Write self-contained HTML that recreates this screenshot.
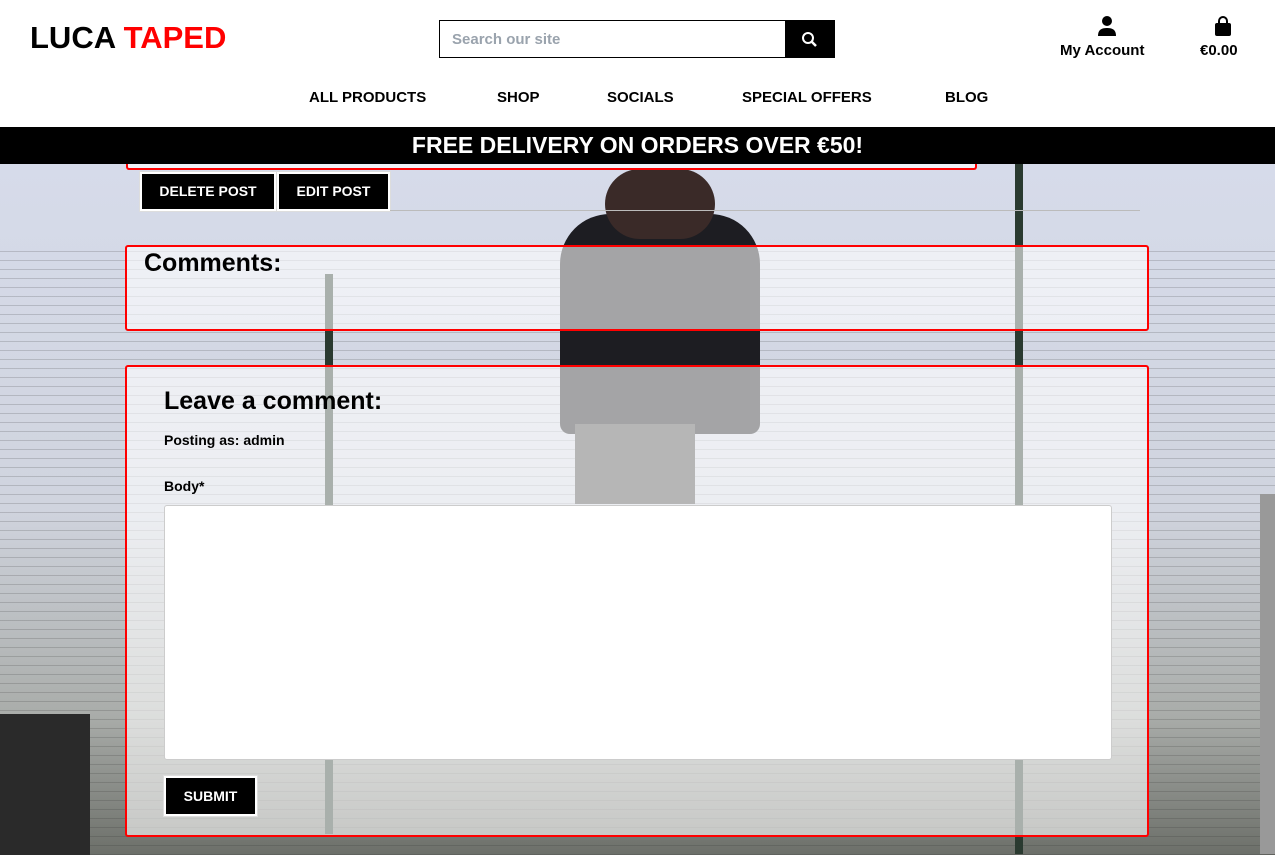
<!DOCTYPE html>
<html><head><style>
*{box-sizing:border-box;margin:0;padding:0}
body{width:1275px;height:855px;overflow:hidden;font-family:"Liberation Sans",sans-serif;position:relative;background:#fff}
.bg{position:absolute;left:0;top:164px;width:1275px;height:691px;background:linear-gradient(#d6dbea 0%,#d0d4de 50%,#a9aca9 80%,#6c6f69 100%);overflow:hidden}
.fence{position:absolute;left:0;top:80px;width:1275px;height:620px;background:repeating-linear-gradient(0deg,rgba(40,40,40,.18) 0 1px,transparent 1px 9px)}
.person{position:absolute;background:#1d1d22}
.post{position:absolute;background:#2a3a30;width:8px}
.hdr{position:absolute;left:0;top:0;width:1275px;height:127px;background:#fff}
.logo{position:absolute;left:30px;top:20px;font-size:31px;font-weight:bold}
.search{position:absolute;left:439px;top:20px;width:396px;height:38px;border:1px solid #000}
.search span{position:absolute;left:12px;top:10px;font-size:15px;color:#9aa3ad;font-weight:bold}
.search .btn{position:absolute;right:0;top:0;width:49px;height:36px;background:#000}
.nav{position:absolute;top:89px;font-size:15px;font-weight:bold}
.banner{position:absolute;left:0;top:127px;width:1275px;height:37px;background:#000;color:#fff;text-align:center;font-size:23px;font-weight:bold;line-height:36px;z-index:5}
.box{position:absolute;border:2px solid #f00;border-radius:3px;background:rgba(255,255,255,.6)}
.bb{position:absolute;background:#000;color:#fff;font-weight:bold;font-size:14px;border:2px solid #fff;outline:1px solid #ddd;text-align:center}
</style></head><body>
<div class="bg">
<div class="fence"></div>
<div class="post" style="left:325px;top:110px;height:560px"></div>
<div class="post" style="left:1015px;top:0;height:690px"></div>
<div class="post" style="left:1260px;top:330px;height:360px;width:15px;background:#999"></div>
<div class="person" style="left:560px;top:50px;width:200px;height:220px;border-radius:50px 50px 10px 10px"></div>
<div class="person" style="left:605px;top:5px;width:110px;height:70px;border-radius:40px;background:#3a2a28"></div>
<div class="person" style="left:575px;top:260px;width:120px;height:80px;background:#4a4a4a"></div>
<div class="person" style="left:0;top:550px;width:90px;height:141px;background:#2a2a2a"></div>
</div>
<div class="hdr">
<div class="logo">LUCA <span style="color:#f00">TAPED</span></div>
<div class="search"><span>Search our site</span><div class="btn"><svg width="49" height="36" viewBox="0 0 49 36"><circle cx="23" cy="17" r="5" fill="none" stroke="#fff" stroke-width="2"/><path d="M27 21l4 4" stroke="#fff" stroke-width="2.5"/></svg></div></div>
<svg style="position:absolute;left:1098px;top:16px" width="18" height="20" viewBox="0 0 18 20"><circle cx="9" cy="5" r="5"/><path d="M0 20c0-6 3-8 9-8s9 2 9 8z"/></svg>
<div style="position:absolute;left:1060px;top:42px;font-size:15px;font-weight:bold">My Account</div>
<svg style="position:absolute;left:1214px;top:16px" width="18" height="20" viewBox="0 0 18 20"><path d="M5 7V5a4 4 0 0 1 8 0v2" fill="none" stroke="#000" stroke-width="2"/><rect x="1" y="7" width="16" height="13" rx="2"/></svg>
<div style="position:absolute;left:1200px;top:42px;font-size:15px;font-weight:bold">€0.00</div>
<div class="nav" style="left:309px">ALL PRODUCTS</div>
<div class="nav" style="left:497px">SHOP</div>
<div class="nav" style="left:607px">SOCIALS</div>
<div class="nav" style="left:742px">SPECIAL OFFERS</div>
<div class="nav" style="left:945px">BLOG</div>
</div>
<div class="box" style="left:126px;top:150px;width:851px;height:20px;border-top:none"></div>
<div class="banner">FREE DELIVERY ON ORDERS OVER €50!</div>
<div class="bb" style="left:140px;top:172px;width:136px;height:39px;line-height:35px">DELETE POST</div>
<div class="bb" style="left:277px;top:172px;width:113px;height:39px;line-height:35px">EDIT POST</div>
<div style="position:absolute;left:390px;top:210px;width:750px;height:1px;background:#bbb"></div>
<div class="box" style="left:125px;top:245px;width:1024px;height:86px"><div style="position:absolute;left:17px;top:2px;font-size:25px;font-weight:bold">Comments:</div></div>
<div class="box" style="left:125px;top:365px;width:1024px;height:472px">
<div style="position:absolute;left:37px;top:20px;font-size:25px;font-weight:bold">Leave a comment:</div>
<div style="position:absolute;left:37px;top:65px;font-size:14px;font-weight:bold">Posting as: admin</div>
<div style="position:absolute;left:37px;top:111px;font-size:14px;font-weight:bold">Body*</div>
<div style="position:absolute;left:37px;top:138px;width:948px;height:255px;background:#fff;border:1px solid #ccc;border-radius:3px"></div>
<div class="bb" style="left:37px;top:409px;width:93px;height:40px;line-height:36px">SUBMIT</div>
</div>
</body></html>
